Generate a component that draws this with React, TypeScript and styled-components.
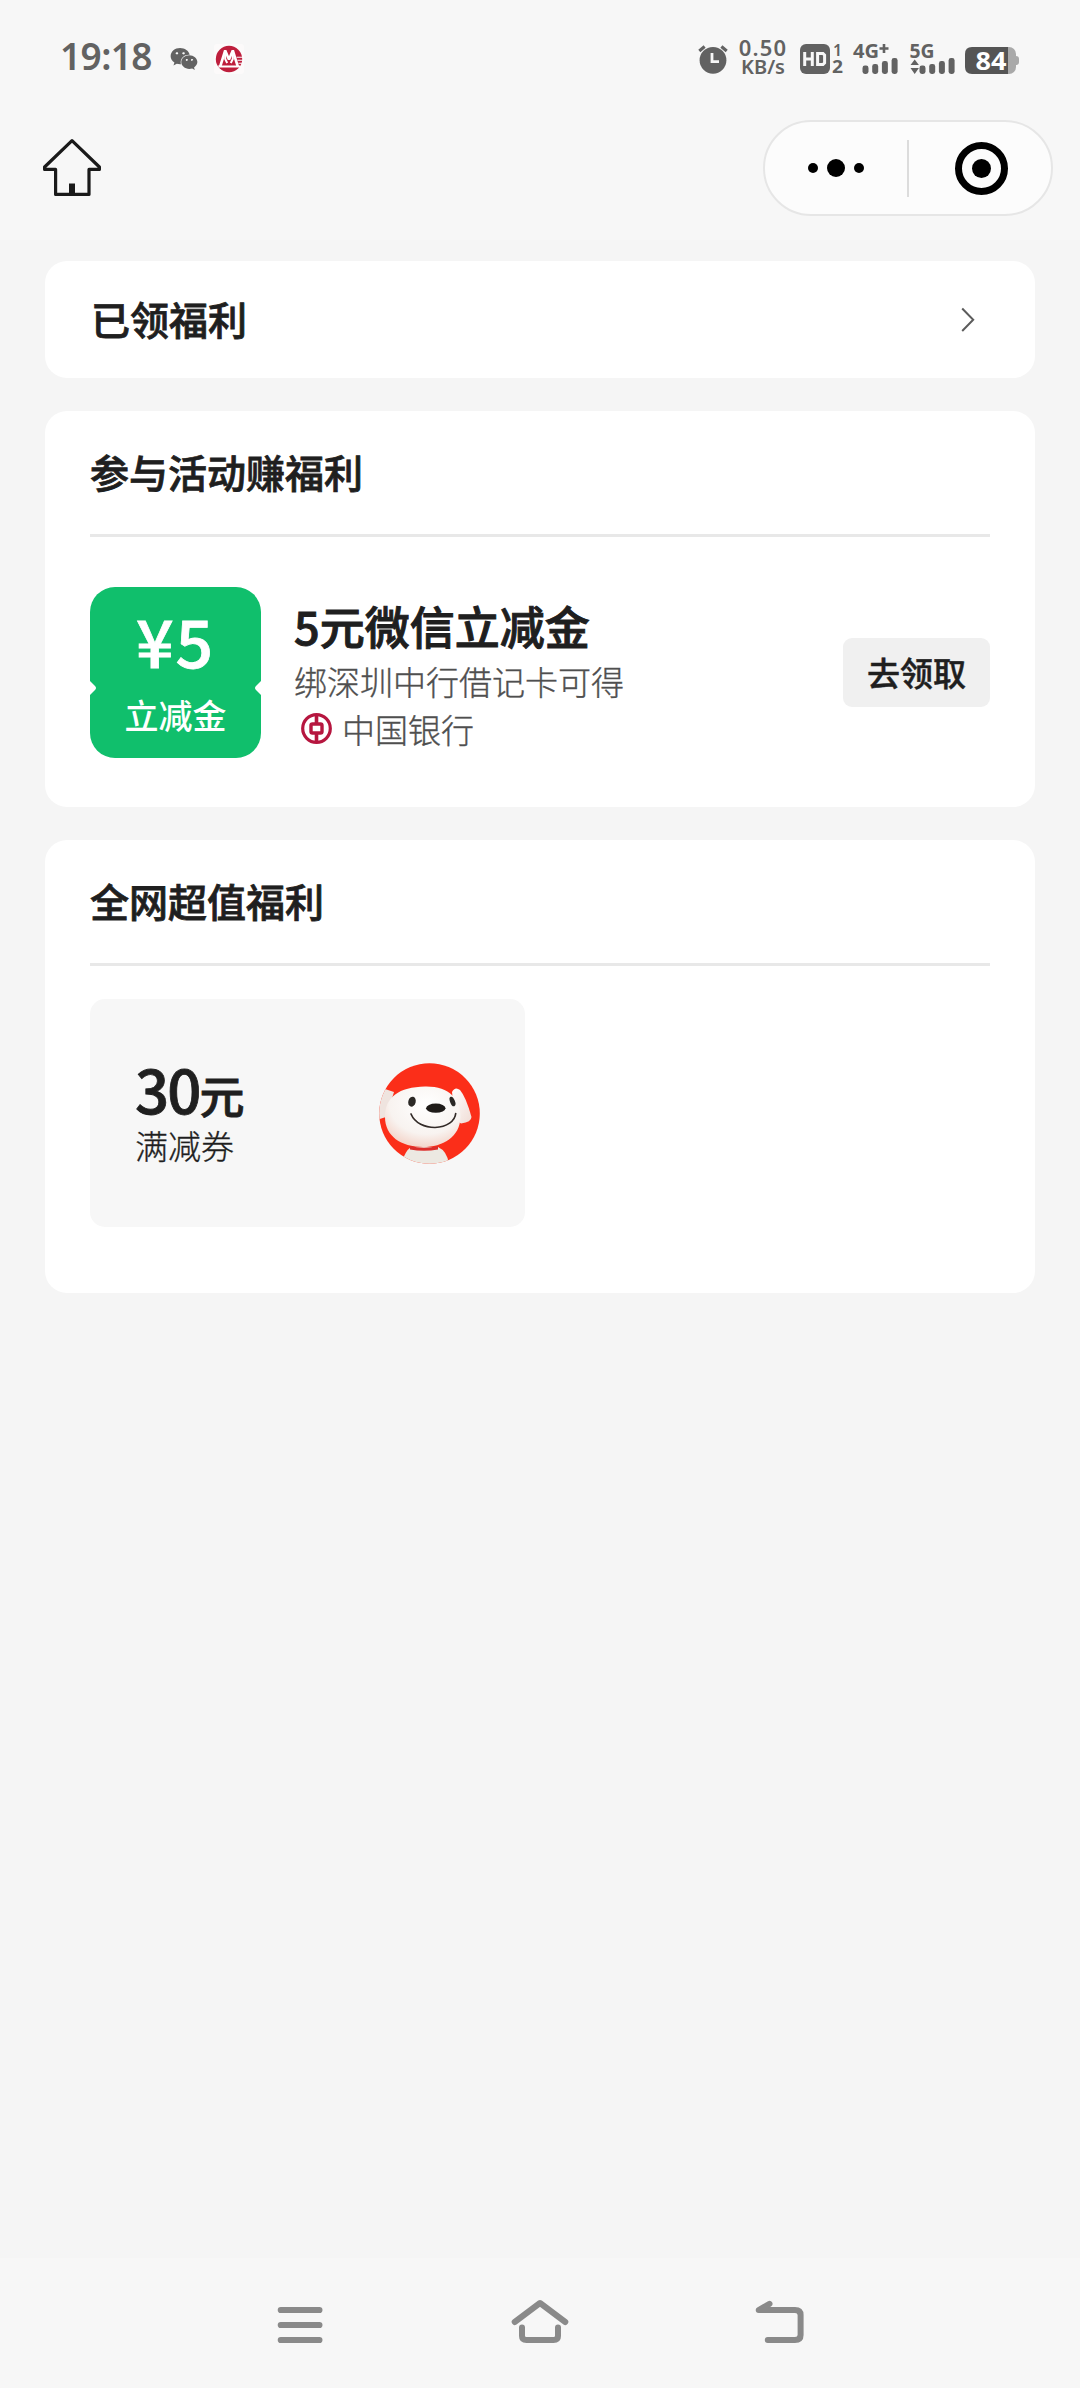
import React from 'react';
import styled, { createGlobalStyle } from 'styled-components';
import { FaWeixin } from 'react-icons/fa';

const cjk = `"Noto Sans CJK SC", "Noto Sans", sans-serif`;

const GlobalStyle = createGlobalStyle`
  * { box-sizing: border-box; }
  body { margin: 0; background: #f5f5f5; font-family: ${cjk}; color: #1f1f1f; }
  svg { display: block; flex: none; overflow: visible; }
`;

const Page = styled.div`
  width: 1080px;
  height: 2388px;
  display: flex;
  flex-direction: column;
  overflow: hidden;
  background: #f5f5f5;
`;

const Header = styled.header`
  height: 240px;
  flex: none;
  background: #f7f7f7;
`;

const StatusBar = styled.div`
  height: 116px;
  padding: 0 61px 0 60px;
  display: flex;
  justify-content: space-between;
  color: #626262;
`;

const StatusGroup = styled.div`
  display: flex;
  align-items: flex-start;
`;

const Clock = styled.span`
  width: 95px;
  margin: 33px 15px 0 0;
  font: 600 37px/46px "Noto Sans", sans-serif;
  letter-spacing: -0.6px;
  white-space: nowrap;
`;

const WechatMark = styled(FaWeixin)`
  width: 28px;
  height: 28px;
  margin: 45px 16px 0 0;
`;

const IconSlot = styled.span<{ $top: number; $right?: number }>`
  display: flex;
  margin: ${p => p.$top}px ${p => p.$right ?? 0}px 0 0;
`;

const NetSpeed = styled.div`
  width: 52px;
  margin: 38px 10px 0 0;
  display: flex;
  flex-direction: column;
  align-items: center;
  font-family: "Noto Sans", sans-serif;
  white-space: nowrap;
`;

const SpeedValue = styled.span`
  font-size: 22px;
  line-height: 19px;
  font-weight: 600;
  letter-spacing: 1.2px;
`;

const SpeedUnit = styled.span`
  font-size: 20px;
  line-height: 19px;
  font-weight: 600;
`;

const NavBar = styled.div`
  height: 124px;
  padding: 4px 27px 0 42px;
  display: flex;
  justify-content: space-between;
  align-items: flex-start;
`;

const HomeButton = styled.div`
  padding-top: 19px;
`;

const Capsule = styled.div`
  width: 290px;
  height: 96px;
  display: flex;
  align-items: center;
  border: 2px solid #e6e6e6;
  border-radius: 48px;
  background: #fcfcfc;
`;

const CapsuleHalf = styled.div`
  flex: 1;
  display: flex;
  align-items: center;
  justify-content: center;
  gap: 9px;
`;

const CapsuleDivider = styled.div`
  width: 2px;
  height: 57px;
  background: #dcdcdc;
`;

const Dot = styled.span<{ $size: number }>`
  width: ${p => p.$size}px;
  height: ${p => p.$size}px;
  border-radius: 50%;
  background: #000;
`;

const Ring = styled.span`
  width: 53px;
  height: 53px;
  margin-left: 3px;
  border: 7px solid #000;
  border-radius: 50%;
  display: flex;
  align-items: center;
  justify-content: center;
`;

const Content = styled.main`
  flex: 1;
  padding: 21px 45px 0;
  display: flex;
  flex-direction: column;
  gap: 33px;
`;

const Card = styled.section<{ $height: number }>`
  height: ${p => p.$height}px;
  padding: 0 45px;
  border-radius: 22px;
  background: #fff;
`;

const LinkRow = styled.div`
  height: 117px;
  padding: 0 15px 0 1px;
  display: flex;
  align-items: center;
  justify-content: space-between;
`;

const CardHead = styled.div`
  height: 126px;
  display: flex;
  align-items: center;
  border-bottom: 3px solid #e8e8e8;
`;

const Heading = styled.h2`
  margin: 0;
  padding-bottom: 4px;
  font-size: 39px;
  line-height: 54px;
  font-weight: 500;
  -webkit-text-stroke: 0.8px currentColor;
`;

const OfferRow = styled.div`
  padding-top: 50px;
  display: flex;
  align-items: center;
`;

const Voucher = styled.div`
  position: relative;
  width: 171px;
  height: 171px;
  flex: none;
  border-radius: 25px;
  background: #10bf6c;
  color: #fff;
  display: flex;
  flex-direction: column;
  align-items: center;
`;

const Notch = styled.svg<{ $side: 'left' | 'right' }>`
  position: absolute;
  top: 93px;
  ${p => p.$side}: 0;
  ${p => (p.$side === 'right' ? 'transform: scaleX(-1);' : '')}
`;

const VoucherAmount = styled.span`
  margin-top: 14px;
  font-size: 66px;
  line-height: 76px;
  font-weight: 500;
  letter-spacing: 2px;
  -webkit-text-stroke: 0.8px currentColor;
`;

const VoucherLabel = styled.span`
  margin-top: 16px;
  font-size: 34px;
  line-height: 44px;
  font-weight: 500;
`;

const OfferInfo = styled.div`
  flex: 1;
  padding: 2px 0 0 33px;
`;

const OfferTitle = styled.h3`
  margin: 0;
  font-size: 45px;
  line-height: 62px;
  font-weight: 500;
  -webkit-text-stroke: 1px currentColor;
`;

const OfferText = styled.div`
  display: flex;
  align-items: center;
  height: 48px;
  font-size: 33px;
  line-height: 48px;
  font-weight: 300;
  color: #4f4f4f;
  -webkit-text-stroke: 0.35px currentColor;
`;

const BankMark = styled.span`
  margin: 0 9px 0 6px;
`;

const ClaimButton = styled.button`
  width: 147px;
  height: 69px;
  padding: 0 0 2px;
  border: 0;
  border-radius: 9px;
  background: #f0f0f0;
  color: #1f1f1f;
  font: 500 33px/48px ${cjk};
  -webkit-text-stroke: 0.5px currentColor;
`;

const Coupon = styled.div`
  width: 435px;
  height: 228px;
  margin-top: 33px;
  padding: 0 45px;
  border-radius: 15px;
  background: #f7f7f7;
  display: flex;
  align-items: center;
  justify-content: space-between;
`;

const CouponAmount = styled.div`
  font-size: 60px;
  line-height: 64px;
  font-weight: 500;
  letter-spacing: -2px;
  -webkit-text-stroke: 0.8px currentColor;
`;

const CouponUnit = styled.span`
  font-size: 45px;
  line-height: 1;
`;

const CouponName = styled.div`
  font-size: 33px;
  line-height: 50px;
  font-weight: 300;
  -webkit-text-stroke: 0.35px currentColor;
`;

const SystemNav = styled.nav`
  height: 130px;
  flex: none;
  padding: 40px 273px 0;
  display: flex;
  justify-content: space-between;
  align-items: flex-start;
  background: #f7f7f7;
`;

const BankLogoCMB = () => (
  <svg width="30" height="30" viewBox="0 0 30 30">
    <rect width="30" height="30" rx="3" fill="#fcfafa" />
    <circle cx="15" cy="15" r="13.2" fill="#be1e3c" />
    <path d="M6.2 22.5 L11.2 6.5 L15 15.5 L18.8 6.5 L23.8 22.5" fill="none" stroke="#fff" strokeWidth="2.6" strokeLinejoin="bevel" />
    <path d="M11.2 8 V15 L13.2 19 M18.8 8 V15 L16.8 19" fill="none" stroke="#fff" strokeWidth="2" />
    <path d="M4 21.4 H26 V23.6 H4.8 Z" fill="#fff" />
    <path d="M22.6 13.2 H29 M23.4 16.2 H29 M24.4 19.2 H29" stroke="#fcfafa" strokeWidth="1.1" />
  </svg>
);

const AlarmIcon = () => (
  <svg width="30" height="30" viewBox="0 0 30 30">
    <circle cx="15" cy="16.3" r="13.4" fill="#626262" />
    <path d="M1.3 7 L6.6 2.6 M28.7 7 L23.4 2.6" stroke="#626262" strokeWidth="3.2" />
    <path d="M14 9 V17.6 H21" fill="none" stroke="#f7f7f7" strokeWidth="2.8" />
  </svg>
);

const HdIcon = () => (
  <svg width="44" height="32" viewBox="0 0 44 32" fontFamily="Noto Sans, sans-serif" fill="#626262">
    <rect x="1" y="1" width="30" height="30" rx="6" />
    <path d="M5.7 9 V23 M13.3 9 V23 M5.7 16 H13.3" stroke="#f7f7f7" strokeWidth="3" fill="none" />
    <path d="M18.6 10.5 H24 L25.6 12.1 V19.9 L24 21.5 H18.6 Z" stroke="#f7f7f7" strokeWidth="3" fill="none" />
    <text x="34" y="12.6" fontSize="16" fontWeight="600">1</text>
    <text x="33" y="30" fontSize="17" fontWeight="700" textLength="11" lengthAdjust="spacingAndGlyphs">2</text>
  </svg>
);

const Bars = ({ x }: { x: number }) => (
  <g fill="#626262">
    {[8.5, 10, 13, 16].map((h, i) => (
      <rect key={h} x={x + i * 9.7} y={31 - h} width="6" height={h} rx="2.4" />
    ))}
  </g>
);

const Signal4G = () => (
  <svg width="47" height="32" viewBox="0 0 47 32" fontFamily="Noto Sans, sans-serif" fontWeight="700" fill="#626262">
    <text x="0" y="15" fontSize="19" textLength="26" lengthAdjust="spacingAndGlyphs">4G</text>
    <path d="M26.5 5.5 H35.5 M31 1 V10" stroke="#626262" strokeWidth="2.6" />
    <Bars x={9.5} />
  </svg>
);

const Signal5G = () => (
  <svg width="47" height="32" viewBox="0 0 47 32" fontFamily="Noto Sans, sans-serif" fontWeight="700" fill="#626262">
    <text x="-0.5" y="15" fontSize="19" textLength="25" lengthAdjust="spacingAndGlyphs">5G</text>
    <path d="M0.5 22 L4.7 16.5 L8.9 22 Z M0.5 25 L4.7 31 L8.9 25 Z" />
    <Bars x={9.5} />
  </svg>
);

const BatteryIcon = () => (
  <svg width="54" height="27" viewBox="0 0 54 27">
    <rect x="20" y="0" width="31" height="27" rx="7" fill="#a9a9a9" />
    <path d="M50 9 H51 Q54 9 54 12 V15 Q54 18 51 18 H50 Z" fill="#a9a9a9" />
    <path d="M7 0 H43 V27 H7 Q0 27 0 20 V7 Q0 0 7 0 Z" fill="#555" />
    <text x="10.5" y="23" fontFamily="Noto Sans, sans-serif" fontWeight="700" fontSize="25.5" textLength="31" lengthAdjust="spacingAndGlyphs" fill="#fff">84</text>
  </svg>
);

const HomeIcon = () => (
  <svg width="60" height="60" viewBox="0 0 60 60" fill="none" stroke="#1a1a1a" strokeWidth="3.2" strokeLinejoin="round">
    <path d="M30 2.6 L2.6 29 V31.4 H13.6 V56.4 H47 V31.4 H57.4 V29 Z" transform="translate(0 -1)" />
    <path d="M30 44.5 V55" strokeWidth="6" />
  </svg>
);

const ChevronIcon = () => (
  <svg width="14" height="26" viewBox="0 0 14 26" fill="none" stroke="#5c5c5c" strokeWidth="2">
    <path d="M1.2 1.5 L12.2 12.8 L1.2 24" />
  </svg>
);

const BankOfChinaLogo = () => (
  <svg width="33" height="33" viewBox="0 0 33 33" fill="none" stroke="#b6163f">
    <circle cx="16.5" cy="16.5" r="13.8" strokeWidth="3.2" />
    <rect x="11" y="12" width="11" height="9" rx="1.5" strokeWidth="3.4" />
    <path d="M16.5 3 V11 M16.5 22 V30" strokeWidth="3.6" />
  </svg>
);

const DogAvatar = () => (
  <svg width="101" height="101" viewBox="0 0 101 101">
    <defs>
      <clipPath id="disc"><circle cx="50.5" cy="50.5" r="50.3" /></clipPath>
      <radialGradient id="face" cx="0.55" cy="0.3" r="0.75">
        <stop offset="0" stopColor="#fff" />
        <stop offset="0.65" stopColor="#f8f3f0" />
        <stop offset="1" stopColor="#f3d0c4" />
      </radialGradient>
      <linearGradient id="ear" x1="0" y1="0" x2="1" y2="1">
        <stop offset="0" stopColor="#fff" />
        <stop offset="1" stopColor="#f0dcd5" />
      </linearGradient>
    </defs>
    <g clipPath="url(#disc)">
      <rect width="101" height="101" fill="#fb2e19" />
      <path d="M-2 26 H6 L15 29 L7 54 L-2 57 Z" fill="#efe4df" />
      <path d="M22 101 Q26 88 32 84 H59 Q68 88 70 101 Z" fill="#ece9e2" />
      <path d="M73 29 Q76 23 81 27 Q87 34 92.5 54 Q92.5 59 82 60.5 L76 56 Z" fill="url(#ear)" />
      <path d="M6 54 C6 34 20 24 46 23.5 C70 23 82 36 81.5 54 C81 74 64 84 44 84 C22 84 6 73 6 54 Z" fill="url(#face)" />
      <path d="M31 83 Q45 86.5 59 83 V86.5 Q45 89 31 86.5 Z" fill="#dc2d2a" />
      <ellipse cx="33" cy="38.7" rx="3.7" ry="5" transform="rotate(15 33 38.7)" fill="#2b2825" />
      <ellipse cx="73.5" cy="38.5" rx="2.4" ry="5" transform="rotate(-22 73.5 38.5)" fill="#2b2825" />
      <ellipse cx="56.8" cy="45.2" rx="9.7" ry="4.6" fill="#1f1b19" />
      <path d="M32 51 C36 60.5 46 64.5 56 64.5 C68 64 76 58 76.7 50.5" fill="none" stroke="#332b28" strokeWidth="1.7" strokeLinecap="round" />
    </g>
  </svg>
);

const MenuIcon = () => (
  <svg width="54" height="48" viewBox="0 0 54 48" stroke="#8a8a8a" strokeWidth="6.2" strokeLinecap="round">
    <path d="M7.8 12 H46.4 M7.8 27 H46.4 M7.8 42 H46.4" />
  </svg>
);

const NavHomeIcon = () => (
  <svg width="60" height="48" viewBox="0 0 60 48" fill="none" stroke="#8a8a8a" strokeWidth="6" strokeLinecap="round" strokeLinejoin="round">
    <path d="M4.7 24 L30 5 L55.3 24" />
    <path d="M12 29.5 V38 Q12 42 16.5 42 H43.5 Q48 42 48 38 V29.5" />
  </svg>
);

const BackIcon = () => (
  <svg width="54" height="48" viewBox="0 0 54 48" fill="none" stroke="#8a8a8a" strokeWidth="6" strokeLinecap="round" strokeLinejoin="round">
    <path d="M14.8 42 H42 Q47.6 42 47.6 37 V17 Q47.6 12 42 12 H5.7 L16.5 5.8" />
    <path d="M6 12 L16 6 L15 12 Z" fill="#8a8a8a" stroke="none" />
  </svg>
);

export default function App() {
  return (
    <Page>
      <GlobalStyle />
      <Header>
        <StatusBar>
          <StatusGroup>
            <Clock>19:18</Clock>
            <WechatMark />
            <IconSlot $top={44}><BankLogoCMB /></IconSlot>
          </StatusGroup>
          <StatusGroup>
            <IconSlot $top={44} $right={9}><AlarmIcon /></IconSlot>
            <NetSpeed>
              <SpeedValue>0.50</SpeedValue>
              <SpeedUnit>KB/s</SpeedUnit>
            </NetSpeed>
            <IconSlot $top={43} $right={10}><HdIcon /></IconSlot>
            <IconSlot $top={43} $right={10}><Signal4G /></IconSlot>
            <IconSlot $top={43} $right={8}><Signal5G /></IconSlot>
            <IconSlot $top={47}><BatteryIcon /></IconSlot>
          </StatusGroup>
        </StatusBar>
        <NavBar>
          <HomeButton><HomeIcon /></HomeButton>
          <Capsule>
            <CapsuleHalf>
              <Dot $size={10} />
              <Dot $size={18} />
              <Dot $size={10} />
            </CapsuleHalf>
            <CapsuleDivider />
            <CapsuleHalf>
              <Ring><Dot $size={19} /></Ring>
            </CapsuleHalf>
          </Capsule>
        </NavBar>
      </Header>
      <Content>
        <Card $height={117}>
          <LinkRow>
            <Heading>已领福利</Heading>
            <ChevronIcon />
          </LinkRow>
        </Card>
        <Card $height={396}>
          <CardHead><Heading>参与活动赚福利</Heading></CardHead>
          <OfferRow>
            <Voucher>
              <VoucherAmount>¥5</VoucherAmount>
              <VoucherLabel>立减金</VoucherLabel>
              <Notch $side="left" width="7" height="16" viewBox="0 0 7 16"><path d="M0 1 L5 6 Q7 8 5 10 L0 15 Z" fill="#fff" /></Notch>
              <Notch $side="right" width="7" height="16" viewBox="0 0 7 16"><path d="M0 1 L5 6 Q7 8 5 10 L0 15 Z" fill="#fff" /></Notch>
            </Voucher>
            <OfferInfo>
              <OfferTitle>5元微信立减金</OfferTitle>
              <OfferText>绑深圳中行借记卡可得</OfferText>
              <OfferText>
                <BankMark><BankOfChinaLogo /></BankMark>
                中国银行
              </OfferText>
            </OfferInfo>
            <ClaimButton>去领取</ClaimButton>
          </OfferRow>
        </Card>
        <Card $height={453}>
          <CardHead><Heading>全网超值福利</Heading></CardHead>
          <Coupon>
            <div>
              <CouponAmount>30<CouponUnit>元</CouponUnit></CouponAmount>
              <CouponName>满减券</CouponName>
            </div>
            <DogAvatar />
          </Coupon>
        </Card>
      </Content>
      <SystemNav>
        <MenuIcon />
        <NavHomeIcon />
        <BackIcon />
      </SystemNav>
    </Page>
  );
}
